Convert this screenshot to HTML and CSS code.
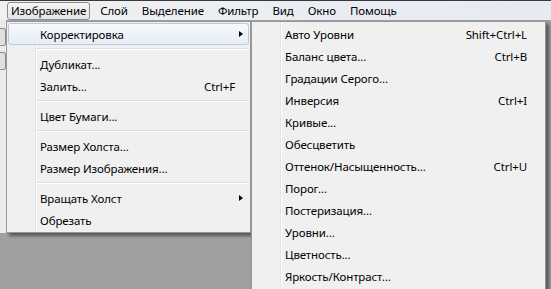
FILE: index.html
```html
<!DOCTYPE html>
<html>
<head>
  <meta charset="UTF-8">
  <title>Изображение</title>
  <link rel="stylesheet" href="styles.css">
</head>
<body>
  <!-- Строка меню -->
  <div class="menubar">
    <div class="menubar-item active"><span>Изображение</span></div>
    <div class="menubar-item"><span>Слой</span></div>
    <div class="menubar-item"><span>Выделение</span></div>
    <div class="menubar-item"><span>Фильтр</span></div>
    <div class="menubar-item"><span>Вид</span></div>
    <div class="menubar-item"><span>Окно</span></div>
    <div class="menubar-item"><span>Помощь</span></div>
  </div>

  <div class="workspace">
    <div class="toolstrip">
      <div class="tool"></div>
      <div class="tool"></div>
    </div>

    <!-- Меню "Изображение" -->
    <div class="menu main-menu">
      <div class="item hover"><span>Корректировка</span><span class="arrow"></span></div>
      <div class="sep"></div>
      <div class="item"><span>Дубликат...</span></div>
      <div class="item"><span>Залить...</span><span class="key">Ctrl+F</span></div>
      <div class="sep"></div>
      <div class="item"><span>Цвет Бумаги...</span></div>
      <div class="sep"></div>
      <div class="item"><span>Размер Холста...</span></div>
      <div class="item"><span>Размер Изображения...</span></div>
      <div class="sep"></div>
      <div class="item"><span>Вращать Холст</span><span class="arrow"></span></div>
      <div class="item"><span>Обрезать</span></div>
    </div>

    <!-- Подменю "Корректировка" -->
    <div class="menu sub-menu">
      <div class="item"><span>Авто Уровни</span><span class="key">Shift+Ctrl+L</span></div>
      <div class="item"><span>Баланс цвета...</span><span class="key">Ctrl+B</span></div>
      <div class="item"><span>Градации Серого...</span></div>
      <div class="item"><span>Инверсия</span><span class="key">Ctrl+I</span></div>
      <div class="item"><span>Кривые...</span></div>
      <div class="item"><span>Обесцветить</span></div>
      <div class="item"><span>Оттенок/Насыщенность...</span><span class="key">Ctrl+U</span></div>
      <div class="item"><span>Порог...</span></div>
      <div class="item"><span>Постеризация...</span></div>
      <div class="item"><span>Уровни...</span></div>
      <div class="item"><span>Цветность...</span></div>
      <div class="item"><span>Яркость/Контраст...</span></div>
    </div>
  </div>
</body>
</html>
```

FILE: styles.css
```css
:root {
  --menu-bg: #f0f0f0;
  --menu-border: #979797;
  --text-color: #000000;
  --workspace: #a0a0a0;
}
body {
  margin: 0;
  width: 551px;
  height: 289px;
  overflow: hidden;
  background: var(--workspace);
  font-family: "Noto Sans", "Open Sans", sans-serif;
  font-size: 11.5px;
  letter-spacing: -0.12px;
  color: var(--text-color);
}
/* Строка меню */
.menubar {
  display: flex;
  height: 19px;
  padding-left: 4px;
  border-top: 1px solid #3a3a3a;
  background: linear-gradient(to right, #f0f0f0, #e9edf3 60%, #e6ebf2);
}
.menubar-item {
  position: relative;
  display: flex;
  align-items: center;
  padding: 0 7px;
  line-height: 1;
}
.menubar-item span {
  position: relative;
}
.menubar-item.active::before {
  content: "";
  position: absolute;
  top: 1px;
  bottom: 0;
  left: 3px;
  right: 3px;
  border: 1px solid #8a8c8e;
  border-radius: 3px;
  background: linear-gradient(#f6f6f6, #e4e4e4);
}
.workspace {
  position: relative;
  height: 269px;
}
.toolstrip {
  width: 6px;
  height: 213px;
  background: #ebebeb;
  padding-top: 8px;
  box-sizing: border-box;
}
.tool {
  width: 5px;
  height: 16px;
  margin-bottom: 6px;
  border: 1px solid #8c8c8c;
  border-left: none;
  border-radius: 0 3px 3px 0;
  background: #e0e0e0;
}
/* Меню */
.menu {
  position: absolute;
  top: 1px;
  box-sizing: border-box;
  padding: 1px;
  background-color: var(--menu-bg);
  background-image: linear-gradient(to right, transparent 28px, #e2e3e3 28px, #e2e3e3 29px, #ffffff 29px, #ffffff 30px, transparent 30px);
  border: 1px solid var(--menu-border);
  box-shadow: 3px 3px 3px rgba(0, 0, 0, 0.45);
}
.main-menu {
  left: 6px;
  width: 245px;
}
.sub-menu {
  left: 251px;
  width: 295px;
  height: 272px;
}
.item {
  display: flex;
  align-items: center;
  height: 22px;
  box-sizing: border-box;
  padding-left: 32px;
  white-space: nowrap;
}
.item.hover {
  border: 1px solid #b9cbe0;
  border-radius: 3px;
  padding-left: 31px;
  background: linear-gradient(#f7f9fc, #e6edf6);
}
.key {
  margin-left: auto;
  padding-right: 14px;
}
.sub-menu .key {
  padding-right: 17px;
}
.arrow {
  margin-left: auto;
  margin-right: 6px;
  width: 0;
  height: 0;
  border-top: 3.5px solid transparent;
  border-bottom: 3.5px solid transparent;
  border-left: 4px solid #000000;
}
.item.hover .arrow {
  margin-right: 5px;
}
.sep {
  height: 8px;
  margin-left: 28px;
  margin-right: 1px;
  background: linear-gradient(transparent 3px, #e0e0e0 3px, #e0e0e0 4px, #ffffff 4px, #ffffff 5px, transparent 5px);
}
```
